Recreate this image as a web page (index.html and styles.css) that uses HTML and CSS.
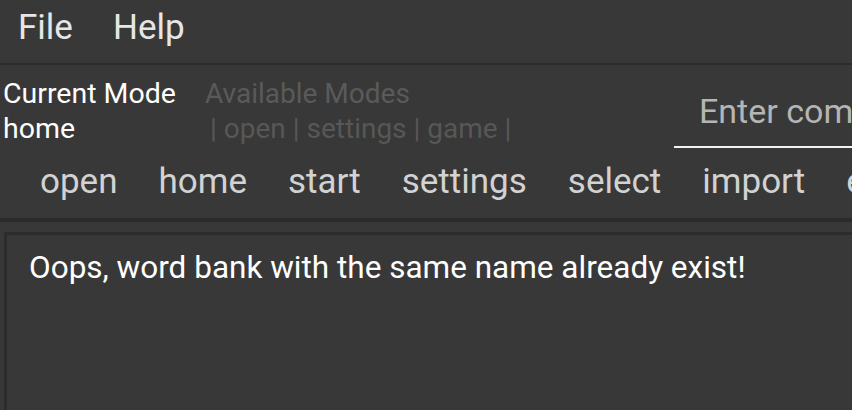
FILE: index.html
```html
<!DOCTYPE html>
<html>
<head>
<meta charset="utf-8">
<link rel="stylesheet" href="styles.css">
</head>
<body>
<div class="app">
  <div class="menubar">
    <span class="menu-item">File</span>
    <span class="menu-item">Help</span>
  </div>
  <div class="mode-row">
    <div class="current">
      <div class="label">Current Mode</div>
      <div class="value">home</div>
    </div>
    <div class="available">
      <div class="label">Available Modes</div>
      <div class="value">| open | settings | game |</div>
    </div>
    <div class="command">
      <div class="placeholder">Enter command here...</div>
    </div>
  </div>
  <div class="buttons">
    <span class="btn">open</span>
    <span class="btn">home</span>
    <span class="btn">start</span>
    <span class="btn">settings</span>
    <span class="btn">select</span>
    <span class="btn">import</span>
    <span class="btn">export</span>
  </div>
  <div class="divider"></div>
  <div class="result">
    <div class="result-text">Oops, word bank with the same name already exist!</div>
  </div>
</div>
</body>
</html>
```

FILE: styles.css
```css
html, body {
  margin: 0;
  padding: 0;
  background: #383838;
  overflow: hidden;
}
body {
  font-family: Roboto, "Liberation Sans", sans-serif;
  width: 852px;
  height: 410px;
}
.app {
  display: flex;
  flex-direction: column;
  width: 852px;
  height: 410px;
}
.menubar {
  display: flex;
  flex: none;
  height: 53px;
  padding-top: 10px;
  border-bottom: 2px solid #2b2b2b;
  padding-left: 18px;
  gap: 40px;
  align-items: flex-start;
  box-sizing: content-box;
}
.menu-item {
  color: #e6e6e6;
  font-size: 35px;
  line-height: 35px;
}
.mode-row {
  display: flex;
  flex: none;
  height: 83px;
  padding-left: 3px;
  white-space: nowrap;
}
.current {
  padding-top: 11px;
  width: 202px;
  flex: none;
}
.label, .value {
  font-size: 28px;
  line-height: 35px;
}
.current .label, .current .value {
  color: #ffffff;
  font-size: 28.5px;
}
.available {
  padding-top: 11px;
  width: 469px;
  flex: none;
}
.available .label {
  color: #5a5a5a;
}
.available .value {
  color: #575757;
  padding-left: 5px;
}
.command {
  flex: none;
  width: 400px;
  border-bottom: 2px solid #f2f2f2;
  box-sizing: border-box;
  padding-left: 25px;
  padding-top: 26px;
}
.placeholder {
  color: #b5b5b5;
  font-size: 34px;
  line-height: 40px;
}
.buttons {
  display: flex;
  flex: none;
  height: 58px;
  padding-top: 12px;
  padding-left: 40px;
  gap: 41px;
  align-items: flex-start;
  white-space: nowrap;
}
.btn {
  color: #d2d2d2;
  font-size: 35px;
  line-height: 44px;
}
.divider {
  height: 4px;
  background: #2b2b2b;
  flex: none;
}
.result {
  margin-top: 10px;
  margin-left: 4px;
  border-top: 3px solid #2c2c2c;
  border-left: 3px solid #2c2c2c;
  flex: 1;
  padding: 14px 0 0 22px;
}
.result-text {
  color: #ffffff;
  font-size: 31.5px;
  line-height: 38px;
  white-space: nowrap;
}
```
